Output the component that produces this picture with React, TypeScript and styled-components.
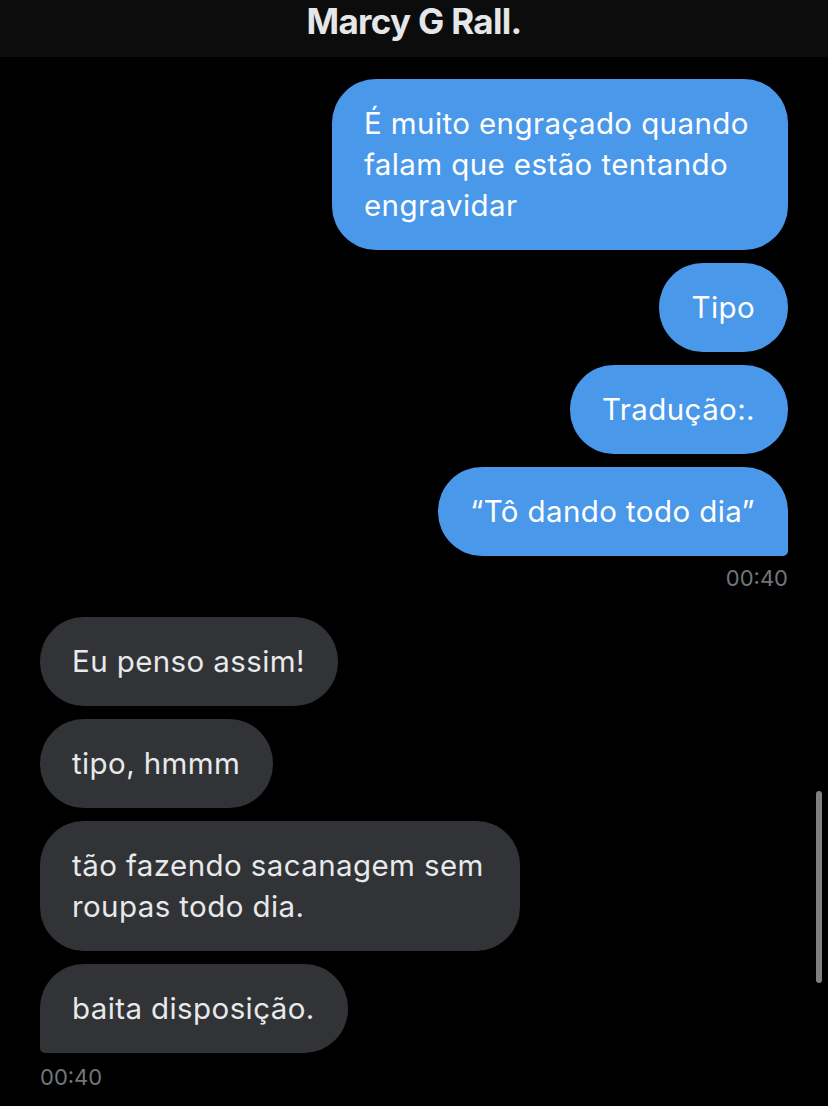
import React from "react";
import styled, { createGlobalStyle } from "styled-components";

const Global = createGlobalStyle`
  html, body { margin: 0; padding: 0; background: #000; }
  body { font-family: Inter, "Noto Sans", "Liberation Sans", sans-serif; -webkit-font-smoothing: antialiased; }
`;

const Screen = styled.div`
  position: relative;
  width: 828px;
  height: 1106px;
  overflow: hidden;
  background: #000;
  display: flex;
  flex-direction: column;
`;

const Header = styled.header`
  height: 57px;
  flex: 0 0 57px;
  background: #0c0c0c;
  display: flex;
  justify-content: center;
  align-items: flex-start;
`;

const Title = styled.h1`
  margin: 0;
  margin-top: 0px;
  font-family: Inter, "Liberation Sans", sans-serif;
  font-weight: 700;
  font-size: 35px;
  line-height: 43px;
  letter-spacing: -0.7px;
  color: #e4e6e7;
`;

const Thread = styled.main`
  display: flex;
  flex-direction: column;
  padding: 22px 40px 0;
`;

const Group = styled.section<{ $side: "me" | "them" }>`
  display: flex;
  flex-direction: column;
  align-items: ${(p) => (p.$side === "me" ? "flex-end" : "flex-start")};
  gap: 13px;
  margin-bottom: ${(p) => (p.$side === "me" ? "26px" : "0")};
`;

const Bubble = styled.div<{ $side: "me" | "them"; $tail?: boolean; $max?: number }>`
  box-sizing: border-box;
  max-width: ${(p) => p.$max ?? 480}px;
  padding: 24px 33px 24px 32px;
  border-radius: 44px;
  font-size: 29.5px;
  line-height: 41px;
  letter-spacing: 0.4px;
  background: ${(p) => (p.$side === "me" ? "#4a98e9" : "#313336")};
  color: ${(p) => (p.$side === "me" ? "#ffffff" : "#e7e9ea")};
  ${(p) =>
    p.$tail
      ? p.$side === "me"
        ? "border-bottom-right-radius: 5px;"
        : "border-bottom-left-radius: 5px;"
      : ""}
`;

const Time = styled.div<{ $side: "me" | "them" }>`
  align-self: ${(p) => (p.$side === "me" ? "flex-end" : "flex-start")};
  margin-top: ${(p) => (p.$side === "me" ? "-4px" : "-2px")};
  font-size: 22px;
  line-height: 26px;
  color: #71767b;
`;

const ScrollThumb = styled.div`
  position: absolute;
  right: 6px;
  top: 791px;
  width: 6px;
  height: 192px;
  border-radius: 3px;
  background: #7f7f7f;
`;

export default function App() {
  return (
    <>
      <Global />
      <Screen>
        <Header>
          <Title>Marcy G Rall.</Title>
        </Header>
        <Thread>
          <Group $side="me">
            <Bubble $side="me" $max={456}>
              É muito engraçado quando falam que estão tentando engravidar
            </Bubble>
            <Bubble $side="me">Tipo</Bubble>
            <Bubble $side="me">Tradução:.</Bubble>
            <Bubble $side="me" $tail>
              “Tô dando todo dia”
            </Bubble>
            <Time $side="me">00:40</Time>
          </Group>
          <Group $side="them">
            <Bubble $side="them">Eu penso assim!</Bubble>
            <Bubble $side="them">tipo, hmmm</Bubble>
            <Bubble $side="them" $max={480}>
              tão fazendo sacanagem sem roupas todo dia.
            </Bubble>
            <Bubble $side="them" $tail>
              baita disposição.
            </Bubble>
            <Time $side="them">00:40</Time>
          </Group>
        </Thread>
        <ScrollThumb />
      </Screen>
    </>
  );
}
